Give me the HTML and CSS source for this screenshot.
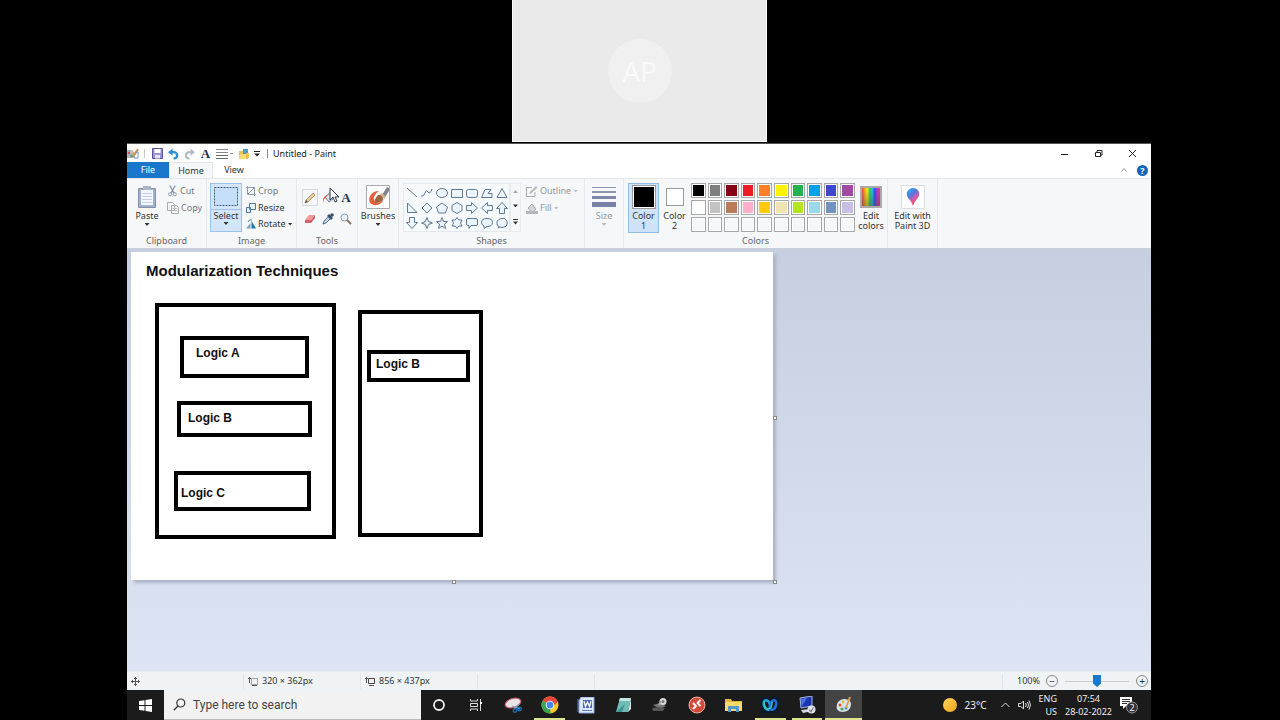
FILE: index.html
```html
<!DOCTYPE html>
<html lang="en">
<head>
<meta charset="utf-8">
<title>Untitled - Paint</title>
<link rel="stylesheet" href="styles.css">
</head>
<body>
<div class="screen">
  <div class="call"><div class="tile"><span class="avatar">AP</span></div></div>

  <main class="desktop">
    <header class="titlebar">
      <svg class="app-icon" width="12" height="12" viewBox="0 0 12 12"><path d="M0 2h5l3 3v5H0z" fill="#a9bac6"/><circle cx="2" cy="5" r="1.2" fill="#d9534f"/><circle cx="4.500" cy="8" r="1.300" fill="#4c9f70"/><circle cx="5" cy="4" r="1" fill="#f3c552"/><path d="M6 9 11 1" stroke="#d58b42" stroke-width="2"/><path d="M8 4h3v6H7" fill="none" stroke="#6d9cc4"/></svg>
      <span class="bar"></span>
      <button class="tool" aria-label="Save"><svg width="11" height="11" viewBox="0 0 11 11"><path d="M.5.5h10v10h-10z" fill="#9a93cf" stroke="#5a529c"/><path d="M2.500 1h6v4h-6z" fill="#fff"/><path d="M3 7h5v3.500H3z" fill="#e7e5f5"/></svg></button>
      <button class="tool" aria-label="Undo"><svg width="11" height="12" viewBox="0 0 12 12"><path d="M3 4h3q4 0 4 3.500 0 3-4 3.500" fill="none" stroke="#2b8fd0" stroke-width="2.400"/><path d="M0 4 5 0v8z" fill="#2b8fd0"/></svg></button>
      <button class="tool" aria-label="Redo"><svg width="11" height="12" viewBox="0 0 12 12"><path d="M9 4H6Q2 4 2 7.500 2 10.500 6 11" fill="none" stroke="#b4bcc8" stroke-width="2.400"/><path d="M12 4 7 0v8z" fill="#b4bcc8"/></svg></button>
      <button class="tool letter" aria-label="Text">A</button>
      <button class="tool wide" aria-label="Size"><svg width="17" height="10" viewBox="0 0 17 10"><path d="M0 .5h12M0 3.500h12" stroke="#888"/><path d="M0 6.500h12M0 9.500h12" stroke="#666"/><path d="M14 4.500h3" stroke="#999"/></svg></button>
      <button class="tool" aria-label="Open"><svg width="12" height="12" viewBox="0 0 12 12"><path d="M1 3h4l1 1h4v7H1z" fill="#f0bf4a"/><path d="M5 1h5v5H5z" fill="#4e9bd0"/><path d="M2 6h7l-1 5H1z" fill="#f9d978"/><path d="M8 5h3v5H8z" fill="#e5c34a"/></svg></button>
      <button class="tool narrow" aria-label="Customize"><svg width="6" height="6" viewBox="0 0 6 6"><path d="M0 .5h6" stroke="#222"/><path d="M0 2.500h6L3 5.500z" fill="#222"/></svg></button>
      <span class="bar dark"></span>
      <span class="caption">Untitled - Paint</span>
      <div class="window-buttons">
        <button aria-label="Minimize"><svg width="9" height="9" viewBox="0 0 9 9"><path d="M1 5.500h7" stroke="#111"/></svg></button>
        <button aria-label="Restore"><svg width="9" height="9" viewBox="0 0 9 9"><path d="M1.500 3.500h5v4h-5zM3 3V1.500h5V6H7" fill="none" stroke="#222"/></svg></button>
        <button aria-label="Close"><svg width="9" height="9" viewBox="0 0 9 9"><path d="m1 1 7 7m0-7-7 7" stroke="#222"/></svg></button>
      </div>
    </header>

    <nav class="tabs">
      <button class="tab file">File</button>
      <button class="tab active">Home</button>
      <button class="tab">View</button>
      <span class="tabs-end">
        <svg width="6" height="4" viewBox="0 0 6 4"><path d="m.5 3.500 2.500-3 2.500 3" fill="none" stroke="#999"/></svg>
        <button class="help" aria-label="Help">?</button>
      </span>
    </nav>

    <section class="ribbon">
      <div class="group clipboard">
        <div class="controls">
          <button class="big"><svg width="20" height="24" viewBox="0 0 20 24"><path d="M1.500 3.500h17v19h-17z" fill="#a3b2cb" stroke="#8292ad"/><path d="M4 5h12v15H4z" fill="#f4f7fd"/><path d="M6 1h8v4H6z" fill="#aab4c4"/><path d="M5 8.500h10M5 11.500h10M5 14.500h10M5 17.500h10" stroke="#c3d0e6"/></svg><span>Paste</span><i class="arrow"></i></button>
          <div class="stack two">
            <button class="small muted"><svg width="11" height="12" viewBox="0 0 12 12"><path d="m3 0 4.500 8M9 0 4.500 8" stroke="#8190a6" stroke-width="1.300"/><circle cx="3.500" cy="9.500" r="1.700" fill="none" stroke="#8190a6"/><circle cx="8.500" cy="9.500" r="1.700" fill="none" stroke="#8190a6"/></svg>Cut</button>
            <button class="small muted"><svg width="12" height="12" viewBox="0 0 12 12"><path d="M.5.5h5l2 2v6h-7zM4.500 3.500h5l2 2v6h-7z" fill="#f5f6f8" stroke="#a5abb5"/><path d="M6 6.500h4M6 8.500h4" stroke="#bbb"/></svg>Copy</button>
          </div>
        </div>
        <h2>Clipboard</h2>
      </div>
      <div class="group image">
        <div class="controls">
          <button class="big select"><span class="pick"><svg width="24" height="19" viewBox="0 0 24 19"><path d="M.5.5h23v18H.5z" fill="#c5dff8" stroke="#41617f" stroke-dasharray="2 1"/></svg></span><span>Select</span><i class="arrow"></i></button>
          <div class="stack">
            <button class="small muted"><svg width="10" height="10" viewBox="0 0 10 10"><path d="M1.500 0v8.500H10M0 1.500h8.500V10M2 8l7-7" fill="none" stroke="#8d9bb0"/></svg>Crop</button>
            <button class="small"><svg width="10" height="10" viewBox="0 0 10 10"><path d="M3.500.5h6v6h-6zM.5 4.500h4v5h-4z" fill="#e8f2fc" stroke="#4d779f"/></svg>Resize</button>
            <button class="small"><svg width="10" height="10" viewBox="0 0 10 10"><path d="M0 9.500h4.500V4z" fill="#8aa1b8"/><path d="M5.500 9.500V2L10 9.500z" fill="#1878ad"/><path d="M2 3q1-3 4-2" fill="none" stroke="#5282a5"/></svg>Rotate<i class="arrow"></i></button>
          </div>
        </div>
        <h2>Image</h2>
      </div>
      <div class="group tools">
        <div class="controls">
          <div class="tool-grid">
            <button class="on" aria-label="Pencil"><svg width="12" height="12" viewBox="0 0 12 12"><path d="M1 11 2 8l7-7 2 2-7 7z" fill="#e8c88c" stroke="#a88b69" stroke-width=".8"/><path d="m1 11 1-3 2 2z" fill="#555"/></svg></button>
            <button aria-label="Fill"><svg width="12" height="12" viewBox="0 0 12 12"><path d="m3 5 5-4 4 5-5 4z" fill="#dbe6f2" stroke="#5d7187"/><path d="M1 11Q0 5 5 3l-1 3-2 1z" fill="#d8663c"/></svg></button>
            <button class="letter" aria-label="Text">A</button>
            <button aria-label="Eraser"><svg width="12" height="10" viewBox="0 0 12 10"><path d="m1 6 4-5h6L7 6z" fill="#f29a9e"/><path d="M1 6h6v3H1z" fill="#d8636e"/><path d="m7 6 4-5v3L7 9z" fill="#c95a68"/></svg></button>
            <button aria-label="Color picker"><svg width="12" height="12" viewBox="0 0 12 12"><path d="m1 11 1-3 5-5 2 2-5 5z" fill="#b9d7ed" stroke="#58728a"/><path d="m5 3 2-2 4 4-2 2z" fill="#394e67"/><circle cx="10" cy="2" r="1.800" fill="#394e67"/></svg></button>
            <button aria-label="Magnifier"><svg width="12" height="12" viewBox="0 0 12 12"><circle cx="4.500" cy="4.500" r="3.500" fill="#e9f2fa" stroke="#8b97a4"/><path d="m7 7 4 4" stroke="#8a7464" stroke-width="2"/></svg></button>
          </div>
          <svg class="pointer" width="11" height="16" viewBox="0 0 11 16"><path d="M1 1v12l3-3 2 5 2-1-2-4h4z" fill="#fff" stroke="#26344a"/></svg>
        </div>
        <h2>Tools</h2>
      </div>
      <div class="group brushes">
        <div class="controls">
          <button class="big"><svg width="24" height="24" viewBox="0 0 24 24"><path d="M.5.5h23v23H.5z" fill="#fff" stroke="#aaa"/><path d="M13 6Q7 6 4 11q-3 7 4 9 7 1 10-6-4 5-8 3-4-3-1-7 1-2 4-4z" fill="#e2613b"/><path d="M12 10q4-1 5 3 1 4-7 5-3-3 2-8z" fill="#9c6642"/><path d="m16 10 5-8 2 1v3l-4 6z" fill="#7d8591"/><path d="m14 9 2-1 4 4-2 2z" fill="#d4b083"/></svg><span>Brushes</span><i class="arrow"></i></button>
        </div>
      </div>
      <div class="group shapes">
        <div class="controls">
          <div class="gallery">
            <button aria-label="Line"><svg viewBox="0 0 12 12"><path d="m1 1 10 9"/></svg></button>
            <button aria-label="Curve"><svg viewBox="0 0 12 12"><path d="M0 9q3 1 4-3t3-1 4-3"/></svg></button>
            <button aria-label="Oval"><svg viewBox="0 0 12 12"><ellipse cx="6" cy="6" rx="5.500" ry="4.500"/></svg></button>
            <button aria-label="Rectangle"><svg viewBox="0 0 12 12"><path d="M.5 2.500h11v8H.5z"/></svg></button>
            <button aria-label="Rounded rectangle"><svg viewBox="0 0 12 12"><rect x=".5" y="2.500" width="11" height="8" rx="2"/></svg></button>
            <button aria-label="Polygon"><svg viewBox="0 0 12 12"><path d="M.5 10.500 4 2.500h6L7 6.500h4v4z"/></svg></button>
            <button aria-label="Triangle"><svg viewBox="0 0 12 12"><path d="m6 1.500 5 9H1z"/></svg></button>
            <button aria-label="Right triangle"><svg viewBox="0 0 12 12"><path d="M1.500 1v9.500H11z"/></svg></button>
            <button aria-label="Diamond"><svg viewBox="0 0 12 12"><path d="m6 1 5 5-5 5-5-5z"/></svg></button>
            <button aria-label="Pentagon"><svg viewBox="0 0 12 12"><path d="m6 1 5.500 4-2 6h-7l-2-6z"/></svg></button>
            <button aria-label="Hexagon"><svg viewBox="0 0 12 12"><path d="m6 .5 5 3v5l-5 3-5-3v-5z"/></svg></button>
            <button aria-label="Right arrow"><svg viewBox="0 0 12 12"><path d="M.5 3.500h5v-3l6 5.500-6 5.500v-3h-5z"/></svg></button>
            <button aria-label="Left arrow"><svg viewBox="0 0 12 12"><path d="M11.500 3.500h-5v-3L.5 6l6 5.500v-3h5z"/></svg></button>
            <button aria-label="Up arrow"><svg viewBox="0 0 12 12"><path d="M3.500 11.500v-5h-3L6 .5l5.500 6h-3v5z"/></svg></button>
            <button aria-label="Down arrow"><svg viewBox="0 0 12 12"><path d="M3.500.5v5h-3L6 11.500l5.500-6h-3v-5z"/></svg></button>
            <button aria-label="Four-point star"><svg viewBox="0 0 12 12"><path d="m6 .5 1.500 4 4 1.500-4 1.500-1.500 4-1.500-4L.5 6l4-1.500z"/></svg></button>
            <button aria-label="Five-point star"><svg viewBox="0 0 12 12"><path d="m6 .5 1.500 4h4L8.500 7l1 4.500L6 9l-3.500 2.500 1-4.500-3-2.500h4z"/></svg></button>
            <button aria-label="Six-point star"><svg viewBox="0 0 12 12"><path d="m6 .5 1.800 2.500H11L9.500 6 11 9H7.800L6 11.500 4.200 9H1l1.500-3L1 3h3.200z"/></svg></button>
            <button aria-label="Rounded callout"><svg viewBox="0 0 12 12"><path d="M2 1.500h8q1.500 0 1.500 1.500v4q0 1.500-1.500 1.500H5l-2 3v-3H2Q.5 8.500.5 7V3Q.5 1.500 2 1.500z"/></svg></button>
            <button aria-label="Oval callout"><svg viewBox="0 0 12 12"><path d="M3 9Q.5 8 .5 5.500q0-4 5.500-4t5.500 4-5.500 4L3 11.500z"/></svg></button>
            <button aria-label="Cloud callout"><svg viewBox="0 0 12 12"><path d="M3 9.500Q.5 9 1 6.500 0 4 2.500 3 4 1 6 1.500q3-1 4 1.500 2 2 1 4 0 3-3 3-2 1-4 0L2 11z"/></svg></button>
          </div>
          <div class="scroll"><i class="arrow up"></i><i class="arrow"></i><svg width="5" height="6" viewBox="0 0 5 6"><path d="M0 .5h5" stroke="#333"/><path d="M0 2.500h5L2.500 5.500z" fill="#333"/></svg></div>
          <div class="stack two outline">
            <button class="small faint"><svg width="12" height="11" viewBox="0 0 12 11"><path d="M9 6v4.500H.5v-9H6" fill="none" stroke="#aaa"/><path d="m3 8 1-2 6-6 1.500 1.500L5 7.500z" fill="#b7b7bb"/></svg>Outline<i class="arrow"></i></button>
            <button class="small faint"><svg width="12" height="11" viewBox="0 0 12 11"><path d="m2 5 4-4 4 5-4 4z" fill="#d5d5da" stroke="#aaa"/><path d="M0 8h12v3H0z" fill="#b4b6bf"/></svg>Fill<i class="arrow"></i></button>
          </div>
        </div>
        <h2>Shapes</h2>
      </div>
      <div class="group size">
        <div class="controls">
          <button class="big faint"><svg width="24" height="24" viewBox="0 0 24 24"><path d="M0 2.500h24" stroke="#8d95ab"/><path d="M0 7h24" stroke="#8d95ab" stroke-width="2"/><path d="M0 12.500h24" stroke="#8089a7" stroke-width="3"/><path d="M0 19.500h24" stroke="#7782a7" stroke-width="5"/></svg><span>Size</span><i class="arrow"></i></button>
        </div>
      </div>
      <div class="group colors">
        <div class="controls">
          <button class="big color picked"><span class="well black"></span><span>Color<br>1</span></button>
          <button class="big color"><span class="well white"></span><span>Color<br>2</span></button>
          <div class="palette">
            <button class="sw" aria-label="Black" style="background-color:#000"></button><button class="sw" aria-label="Gray" style="background-color:#7f7f7f"></button><button class="sw" aria-label="Dark red" style="background-color:#880015"></button><button class="sw" aria-label="Red" style="background-color:#ed1c24"></button><button class="sw" aria-label="Orange" style="background-color:#ff7f27"></button><button class="sw" aria-label="Yellow" style="background-color:#fff200"></button><button class="sw" aria-label="Green" style="background-color:#22b14c"></button><button class="sw" aria-label="Turquoise" style="background-color:#00a2e8"></button><button class="sw" aria-label="Indigo" style="background-color:#3f48cc"></button><button class="sw" aria-label="Purple" style="background-color:#a349a4"></button>
            <button class="sw" aria-label="White" style="background-color:#fff"></button><button class="sw" aria-label="Light gray" style="background-color:#c3c3c3"></button><button class="sw" aria-label="Brown" style="background-color:#b97a57"></button><button class="sw" aria-label="Rose" style="background-color:#ffaec9"></button><button class="sw" aria-label="Gold" style="background-color:#ffc90e"></button><button class="sw" aria-label="Light yellow" style="background-color:#efe4b0"></button><button class="sw" aria-label="Lime" style="background-color:#b5e61d"></button><button class="sw" aria-label="Light turquoise" style="background-color:#99d9ea"></button><button class="sw" aria-label="Blue gray" style="background-color:#7092be"></button><button class="sw" aria-label="Lavender" style="background-color:#c8bfe7"></button>
            <button class="sw" aria-label="Custom 1"></button><button class="sw" aria-label="Custom 2"></button><button class="sw" aria-label="Custom 3"></button><button class="sw" aria-label="Custom 4"></button><button class="sw" aria-label="Custom 5"></button><button class="sw" aria-label="Custom 6"></button><button class="sw" aria-label="Custom 7"></button><button class="sw" aria-label="Custom 8"></button><button class="sw" aria-label="Custom 9"></button><button class="sw" aria-label="Custom 10"></button>
          </div>
          <button class="big edit"><span class="spectrum"></span><span>Edit<br>colors</span></button>
        </div>
        <h2>Colors</h2>
      </div>
      <div class="group paint3d">
        <div class="controls">
          <button class="big"><svg width="24" height="24" viewBox="0 0 24 24"><defs><linearGradient id="drop" x1="0" y1="0" x2=".6" y2="1"><stop offset="0" stop-color="#22b8ee"/><stop offset=".45" stop-color="#5a76dc"/><stop offset=".7" stop-color="#d95aa8"/><stop offset="1" stop-color="#f0534a"/></linearGradient></defs><path d="M.5.500h23v23H.5z" fill="#fff" stroke="#ddd"/><path d="M12 21q-1-4-4-7-3-3-2-7 2-4 6-4t6 4q1 4-2 7-3 3-4 7z" fill="url(#drop)"/></svg><span>Edit with<br>Paint 3D</span></button>
        </div>
      </div>
    </section>

    <section class="workspace">
      <div class="paper">
        <svg width="642" height="328" viewBox="0 0 642 328">
          <g class="ink">
            <rect x="26" y="53" width="177" height="232"/>
            <rect x="51" y="86" width="125" height="38"/>
            <rect x="48" y="151" width="131" height="32"/>
            <rect x="45" y="221" width="133" height="36"/>
            <rect x="229" y="60" width="121" height="223"/>
            <rect x="238" y="100" width="99" height="28"/>
          </g>
          <text class="heading" x="15" y="24">Modularization Techniques</text>
          <g class="logic">
            <text x="65" y="105">Logic A</text>
            <text x="57" y="170">Logic B</text>
            <text x="50" y="245">Logic C</text>
            <text x="245" y="116">Logic B</text>
          </g>
        </svg>
        <i class="handle east"></i><i class="handle south"></i><i class="handle corner"></i>
      </div>
    </section>

    <footer class="status">
      <span class="cell"><svg width="9" height="9" viewBox="0 0 9 9"><path d="M4.500 0v9M0 4.500h9M3 1.500h3M3 7.500h3M1.500 3v3M7.500 3v3" stroke="#555"/></svg></span>
      <span class="cell"><svg width="10" height="9" viewBox="0 0 10 9"><path d="M3.500 1.500h6v6h-6z" fill="none" stroke="#555" stroke-dasharray="1 1"/><path d="M1.500 0v6M0 1.500h3M4 8.500h5" stroke="#555" fill="none"/></svg>320 × 362px</span>
      <span class="cell"><svg width="10" height="9" viewBox="0 0 10 9"><path d="M3.500 1.500h6v5h-6z" fill="none" stroke="#444"/><path d="M1.500 0v6M0 1.500h3M4 8.500h5" stroke="#555" fill="none"/></svg>856 × 437px</span>
      <span class="cell"></span>
      <span class="cell rest"></span>
      <span class="zoom">
        <label for="zoom">100%</label>
        <button aria-label="Zoom out">−</button>
        <input id="zoom" type="range" min="0" max="100" value="50">
        <button aria-label="Zoom in">+</button>
      </span>
    </footer>

    <footer class="taskbar">
      <button class="start" aria-label="Start"><svg width="13" height="13" viewBox="0 0 13 13"><path d="m0 2 5.500-.800V6H0zM6.500 1 13 0v6H6.500zM0 7h5.500v4.800L0 11zM6.500 7H13v6l-6.500-1z" fill="#fff"/></svg></button>
      <label class="search"><svg width="13" height="13" viewBox="0 0 13 13"><circle cx="7.800" cy="5" r="4" fill="none" stroke="#333" stroke-width="1.200"/><path d="M5 8 .8 12.200" stroke="#333" stroke-width="1.300"/></svg><input type="text" placeholder="Type here to search" aria-label="Search"></label>
      <div class="apps">
        <button aria-label="Cortana"><svg width="14" height="14" viewBox="0 0 14 14"><circle cx="7" cy="7" r="5" fill="none" stroke="#eee" stroke-width="1.800"/></svg></button>
        <button aria-label="Task view"><svg width="14" height="14" viewBox="0 0 14 14"><path d="M1.500 1v2h7V1M1.500 13v-2h7v2M1.500 5.500h7v3h-7zM11.500 1v12" fill="none" stroke="#ddd"/><path d="M11 4h2v2h-2z" fill="#fff"/></svg></button>
        <button aria-label="Snipping Tool"><svg width="18" height="16" viewBox="0 0 18 16"><ellipse cx="9" cy="6" rx="8" ry="4.500" transform="rotate(-18 9 6)" fill="#e9e5e8" stroke="#c2606d" stroke-width="1.200"/><path d="m8 9 8 3M15 7l-5 5" stroke="#8da9bf" stroke-width="1.300"/><circle cx="11" cy="13.500" r="1.800" fill="none" stroke="#1973bd" stroke-width="1.300"/><circle cx="15.500" cy="12" r="1.800" fill="none" stroke="#1973bd" stroke-width="1.300"/></svg></button>
        <button class="running" aria-label="Chrome"><svg width="18" height="18" viewBox="0 0 18 18"><circle cx="9" cy="9" r="8.500" fill="#f9c929"/><path d="M9 9 1.600 4.800A8.500 8.500 0 0 1 16.400 4.800z" fill="#e8453c"/><path d="M9 9 9.500 17.500A8.500 8.500 0 0 1 1.600 4.800z" fill="#35a753"/><path d="M8 5h9l-3 4z" fill="#e8453c"/><circle cx="9" cy="9" r="4.300" fill="#fff"/><circle cx="9" cy="9" r="3.400" fill="#4589ee"/></svg></button>
        <button aria-label="Word"><svg width="18" height="17" viewBox="0 0 18 17"><path d="M4 0h13v16H2V4z" fill="#dfe8fa" stroke="#8ca4d6"/><path d="M6 3h9v8H6z" fill="#4568b0"/><path d="m7 4 1.500 5.500L10.500 5l2 4.500L14 4" fill="none" stroke="#fff" stroke-width="1.300"/><path d="M1 2v13M5 13.500h10" stroke="#5e7ebb"/></svg></button>
        <button aria-label="Notepad"><svg width="17" height="16" viewBox="0 0 17 16"><path d="M5 1h11l-3 14H1z" fill="#6fbcb6"/><path d="M5 1h11l-1 3H4z" fill="#c2e4df"/><path d="m16 1 0 11-3 3z" fill="#dbe9e6"/><path d="m1 15 9-8-3 8z" fill="#3f938f"/></svg></button>
        <button aria-label="Device"><svg width="18" height="16" viewBox="0 0 18 16"><path d="m2 8 7-2 6 3-6 3z" fill="#777"/><path d="m1 11 7-1 6 1-2 3H2z" fill="#565656"/><circle cx="12" cy="4.500" r="3.500" fill="#d8d8d8"/><circle cx="12" cy="4.500" r="1.500" fill="#777"/><path d="m8 8 2-4" stroke="#aaa" stroke-width="2"/></svg></button>
        <button aria-label="Remote Desktop"><svg width="18" height="18" viewBox="0 0 18 18"><circle cx="9" cy="9" r="8" fill="#d34b38" stroke="#eeb0a5"/><path d="m5 7 3 3-3 3M12.500 4 9.500 7l3 3" fill="none" stroke="#fff" stroke-width="1.800"/></svg></button>
        <button aria-label="File Explorer"><svg width="17" height="14" viewBox="0 0 17 14"><path d="M0 1h6l1 2h10v10H0z" fill="#e4b83d"/><path d="M0 4h17v9H0z" fill="#f9d96b"/><path d="M3 8h11v6h-3v-3H6v3H3z" fill="#4b9bc5"/></svg></button>
        <button class="running" aria-label="Webex"><svg width="18" height="16" viewBox="0 0 18 16"><path d="M0 0h18v16H0z" fill="#071b2b"/><g fill="none" stroke-width="2.500"><ellipse cx="6" cy="8" rx="3" ry="5" transform="rotate(-20 6 8)" stroke="#20a5e5"/><ellipse cx="12" cy="8" rx="3" ry="5" transform="rotate(20 12 8)" stroke="#256fe0"/><path d="M3 4q0 8 4 8t4-7" stroke="#35c9b2" stroke-width="1.500"/></g></svg></button>
        <button class="running" aria-label="Remote session"><svg width="18" height="18" viewBox="0 0 18 18"><path d="m2 2 12-2v10L3 12z" fill="#1b35b1" stroke="#a9b9e2"/><path d="m3 3 6-1-5 8z" fill="#4e73e0"/><path d="m3 14 8-1 3 2-9 2z" fill="#cfd5dd"/><circle cx="13.500" cy="13.500" r="4" fill="#dfe3e7"/><path d="m11.500 14 1.500 1.500 2.500-4" fill="none" stroke="#778" stroke-width="1.200"/></svg></button>
        <button class="running current" aria-label="Paint"><svg width="18" height="18" viewBox="0 0 18 18"><path d="M2 8q2-5 8-5 6 1 6 5 0 7-8 8-8 0-6-8z" fill="#d9e4e8"/><circle cx="5" cy="9" r="1.500" fill="#d85345"/><circle cx="8" cy="6" r="1.400" fill="#e6b83b"/><circle cx="7" cy="13" r="1.600" fill="#4da261"/><circle cx="11" cy="12" r="1.500" fill="#4189c8"/><path d="m11 12 4-11" stroke="#d8a15e" stroke-width="2"/></svg></button>
      </div>
      <div class="tray">
        <span class="sun"></span><span class="temp">23°C</span>
        <svg width="9" height="6" viewBox="0 0 9 6"><path d="m.5 5 4-4 4 4" fill="none" stroke="#ddd"/></svg>
        <svg width="13" height="12" viewBox="0 0 13 12"><path d="M.5 4.500H3L5.500 2v8L3 7.500H.5zM7.500 4q1.500 2 0 4M9.500 3q2 3 0 6M11 1.500q3 4.500 0 9" fill="none" stroke="#ddd"/></svg>
        <span class="two-line">ENG<br>US</span>
        <span class="two-line clock">07:54<br>28-02-2022</span>
        <svg width="19" height="18" viewBox="0 0 19 18"><path d="M0 1h12v9H6l-3 3v-3H0z" fill="#fff"/><path d="M2 3.500h8M2 5.500h8M2 7.500h5" stroke="#333"/><circle cx="12" cy="11.500" r="5.500" fill="#333" stroke="#999"/><text class="count" x="12" y="15" text-anchor="middle">2</text></svg>
      </div>
    </footer>
  </main>
</div>
</body>
</html>
```
FILE: styles.css
```css
* { box-sizing: border-box; }
body { margin: 0; background: #000; font-family: "Noto Sans", "Open Sans", sans-serif; font-size: 9px; line-height: 10px; color: #333; }
button { font: inherit; color: inherit; border: 0; padding: 0; margin: 0; background: none; }
svg { display: block; flex: none; }
.screen { min-height: 100vh; display: flex; flex-direction: column; }

.call { display: flex; justify-content: center; padding-bottom: 1px; }
.tile { width: 255px; height: 142px; margin-right: 1px; background: #eaeaea; border: 1px solid #fafafa; border-top: 0; display: flex; align-items: center; justify-content: center; }
.avatar { width: 64px; height: 64px; border-radius: 50%; background: #f0f0f0; color: #fafafa; font: 28px/64px "Open Sans", sans-serif; text-align: center; }

.desktop { flex: 1; display: flex; flex-direction: column; margin: 0 129px 0 127px; background: #fff; }

.titlebar { display: flex; align-items: center; height: 19px; gap: 5px; border-top: 1px solid #555; padding-top: 1px; }
.bar { width: 1px; height: 9px; background: #ccc; margin-right: 2px; }
.bar.dark { background: #888; margin: 0 0 0 2px; }
.tool { display: flex; justify-content: center; width: 11px; }
.tool.wide { width: 17px; }
.tool.narrow { width: 6px; }
.letter { font: bold 13px/14px "Liberation Serif", serif; color: #1e3350; }
.caption { color: #222; }
.window-buttons { margin-left: auto; display: flex; padding-right: 2px; }
.window-buttons button { width: 34px; height: 17px; display: flex; align-items: center; justify-content: center; }

.tabs { display: flex; height: 17px; border-bottom: 1px solid #e4e6e9; }
.tab { width: 42px; }
.tab.file { background: #1976ca; color: #fff; }
.tab.active { width: 44px; background: #f5f7f8; border: 1px solid #e4e6e9; border-bottom: 0; }
.tabs-end { margin-left: auto; display: flex; align-items: center; gap: 10px; padding-right: 3px; }
.help { width: 11px; height: 11px; border-radius: 50%; background: #1565b5; color: #fff; font-weight: bold; line-height: 11px; }

.ribbon { display: flex; height: 70px; background: #f5f7f9; border-bottom: 1px solid #c9cedb; }
.group { display: flex; flex-direction: column; border-right: 1px solid #e6e9ec; padding: 4px 0 1px; }
.controls { flex: 1; display: flex; align-items: flex-start; position: relative; }
.group h2 { margin: 0; font-size: 9px; line-height: 12px; font-weight: normal; text-align: center; color: #666; }
.big { display: flex; flex-direction: column; align-items: center; width: 40px; padding-top: 2px; gap: 2px; }
.arrow { width: 5px; height: 3px; background: #333; clip-path: polygon(0 0, 100% 0, 50% 100%); }
.arrow.up { transform: rotate(180deg); }
.stack { display: flex; flex-direction: column; height: 49px; justify-content: space-between; }
.stack.two { height: 33px; }
.small { display: flex; align-items: center; gap: 2px; height: 16px; white-space: nowrap; }
.muted { color: #737a83; }
.faint { color: #999; }
.faint .arrow { background: #bbb; }
.clipboard { width: 80px; }
.image { width: 90px; }
.image .controls { padding-left: 3px; gap: 4px; }
.select { width: 32px; height: 49px; padding: 0; gap: 1px; background: #d3e5f8; border: 1px solid #9cc2e8; }
.pick { height: 26px; width: 100%; display: flex; align-items: center; justify-content: center; border-bottom: 1px solid #9cc2e8; }
.tools { width: 61px; }
.tool-grid { display: grid; grid-template-columns: repeat(3, 16px); gap: 4px 2px; padding: 6px 0 0 5px; }
.tool-grid button { height: 17px; display: flex; align-items: center; justify-content: center; }
.tool-grid .on { border: 1px solid #d5d8dc; }
.pointer { position: absolute; left: 32px; top: 4px; }
.brushes { width: 41px; }
.shapes { width: 186px; }
.shapes .controls { padding-left: 4px; }
.gallery { display: grid; grid-template-columns: repeat(7, 15px); grid-auto-rows: 15px; padding: 1px 0; background: #f6fafd; border: 1px solid #e3e9ef; }
.gallery button { display: flex; align-items: center; justify-content: center; }
.gallery svg { width: 12px; height: 12px; fill: #edf5fb; stroke: #5d7896; }
.scroll { width: 11px; height: 49px; display: flex; flex-direction: column; align-items: center; justify-content: space-around; border: 1px solid #e9ecef; }
.scroll .up { background: #aaa; }
.outline { padding-left: 5px; }
.size { width: 39px; }
.colors .controls { padding-left: 4px; }
.color { width: 31px; height: 50px; gap: 2px; }
.picked { background: #cfe3f8; border: 1px solid #92bce6; padding-top: 1px; }
.well { width: 24px; height: 24px; border: 1px solid #999; box-shadow: inset 0 0 0 1px #fff; }
.well.black { background: #000; }
.well.white { width: 18px; height: 18px; margin: 3px 0; background: #fff; }
.palette { display: grid; grid-template-columns: repeat(10, 1fr); grid-template-rows: repeat(3, 1fr); gap: 2px; width: 164px; height: 49px; margin-left: 1px; }
.sw { border: 1px solid #a7a7a7; box-shadow: inset 0 0 0 1px #fff; }
.edit { width: 32px; }
.spectrum { width: 22px; height: 22px; margin: 1px 0; border: 2px solid #aaa; background: linear-gradient(rgba(255,255,255,.1), rgba(90,90,90,.5)), linear-gradient(90deg, #e33, #f90, #fe0, #2c3, #0be, #23e, #b2c, #e25); }
.paint3d { width: 50px; }
.paint3d .big { width: 49px; }

.workspace { flex: 1; padding: 3px 4px; background: linear-gradient(#c5cfdf, #dde5f4); }
.paper { position: relative; width: 642px; height: 328px; background: #fff; box-shadow: 3px 3px 3px #aab3c4; }
.ink { fill: none; stroke: #000; stroke-width: 4px; }
.heading { font: bold 15px "Liberation Sans", sans-serif; fill: #111; }
.logic { font: bold 12px "Liberation Sans", sans-serif; fill: #111; }
.handle { position: absolute; width: 4px; height: 4px; background: #fff; border: 1px solid #888; }
.east { left: 100%; top: 50%; }
.south { left: 50%; top: 100%; }
.corner { left: 100%; top: 100%; }

.status { display: flex; align-items: center; height: 19px; background: #f0f3f5; border-top: 1px solid #e6eaf2; }
.cell { display: flex; align-items: center; gap: 4px; width: 117px; height: 15px; padding-left: 4px; border-right: 1px solid #e2e5e8; }
.cell.rest { flex: 1; }
.zoom { display: flex; align-items: center; gap: 6px; padding: 0 3px 0 14px; }
.zoom button { width: 12px; height: 12px; border: 1px solid #888; border-radius: 50%; line-height: 9px; font-size: 10px; }
.zoom input { appearance: none; width: 64px; height: 12px; margin: 0 1px; background: linear-gradient(#c8ccd0, #c8ccd0) center / 100% 1px no-repeat; }
.zoom input::-webkit-slider-thumb { appearance: none; width: 8px; height: 12px; background: #1a78cc; clip-path: polygon(0 0, 100% 0, 100% 70%, 50% 100%, 0 70%); }

.taskbar { display: flex; height: 30px; background: #1b1b1b; color: #eee; }
.start { width: 37px; display: flex; align-items: center; justify-content: center; }
.search { flex: 1; max-width: 257px; display: flex; align-items: center; gap: 7px; padding-left: 9px; background: #f2f2f2; border-bottom: 1px solid #bbb; }
.search input { flex: 1; min-width: 0; border: 0; padding: 0; background: none; outline: 0; font: 12px/16px Roboto, sans-serif; }
.search input::placeholder { color: #444; opacity: 1; }
.apps { display: flex; width: 441px; }
.apps button { flex: 1; display: flex; align-items: center; justify-content: center; position: relative; }
.apps .running::after { content: ""; position: absolute; left: 3px; right: 3px; bottom: 0; height: 2px; background: #dde58e; }
.apps .current { background: #444; }
.apps .current::after { left: 0; right: 0; }
.tray { margin-left: auto; display: flex; align-items: center; gap: 8px; padding-right: 12px; white-space: nowrap; }
.sun { width: 14px; height: 14px; border-radius: 50%; background: linear-gradient(135deg, #ffd95a, #f0a018); }
.temp { font-size: 10px; margin-right: 6px; }
.two-line { text-align: right; line-height: 13px; }
.clock { text-align: center; }
.count { font: 9px "Open Sans", sans-serif; fill: #fff; }
```
